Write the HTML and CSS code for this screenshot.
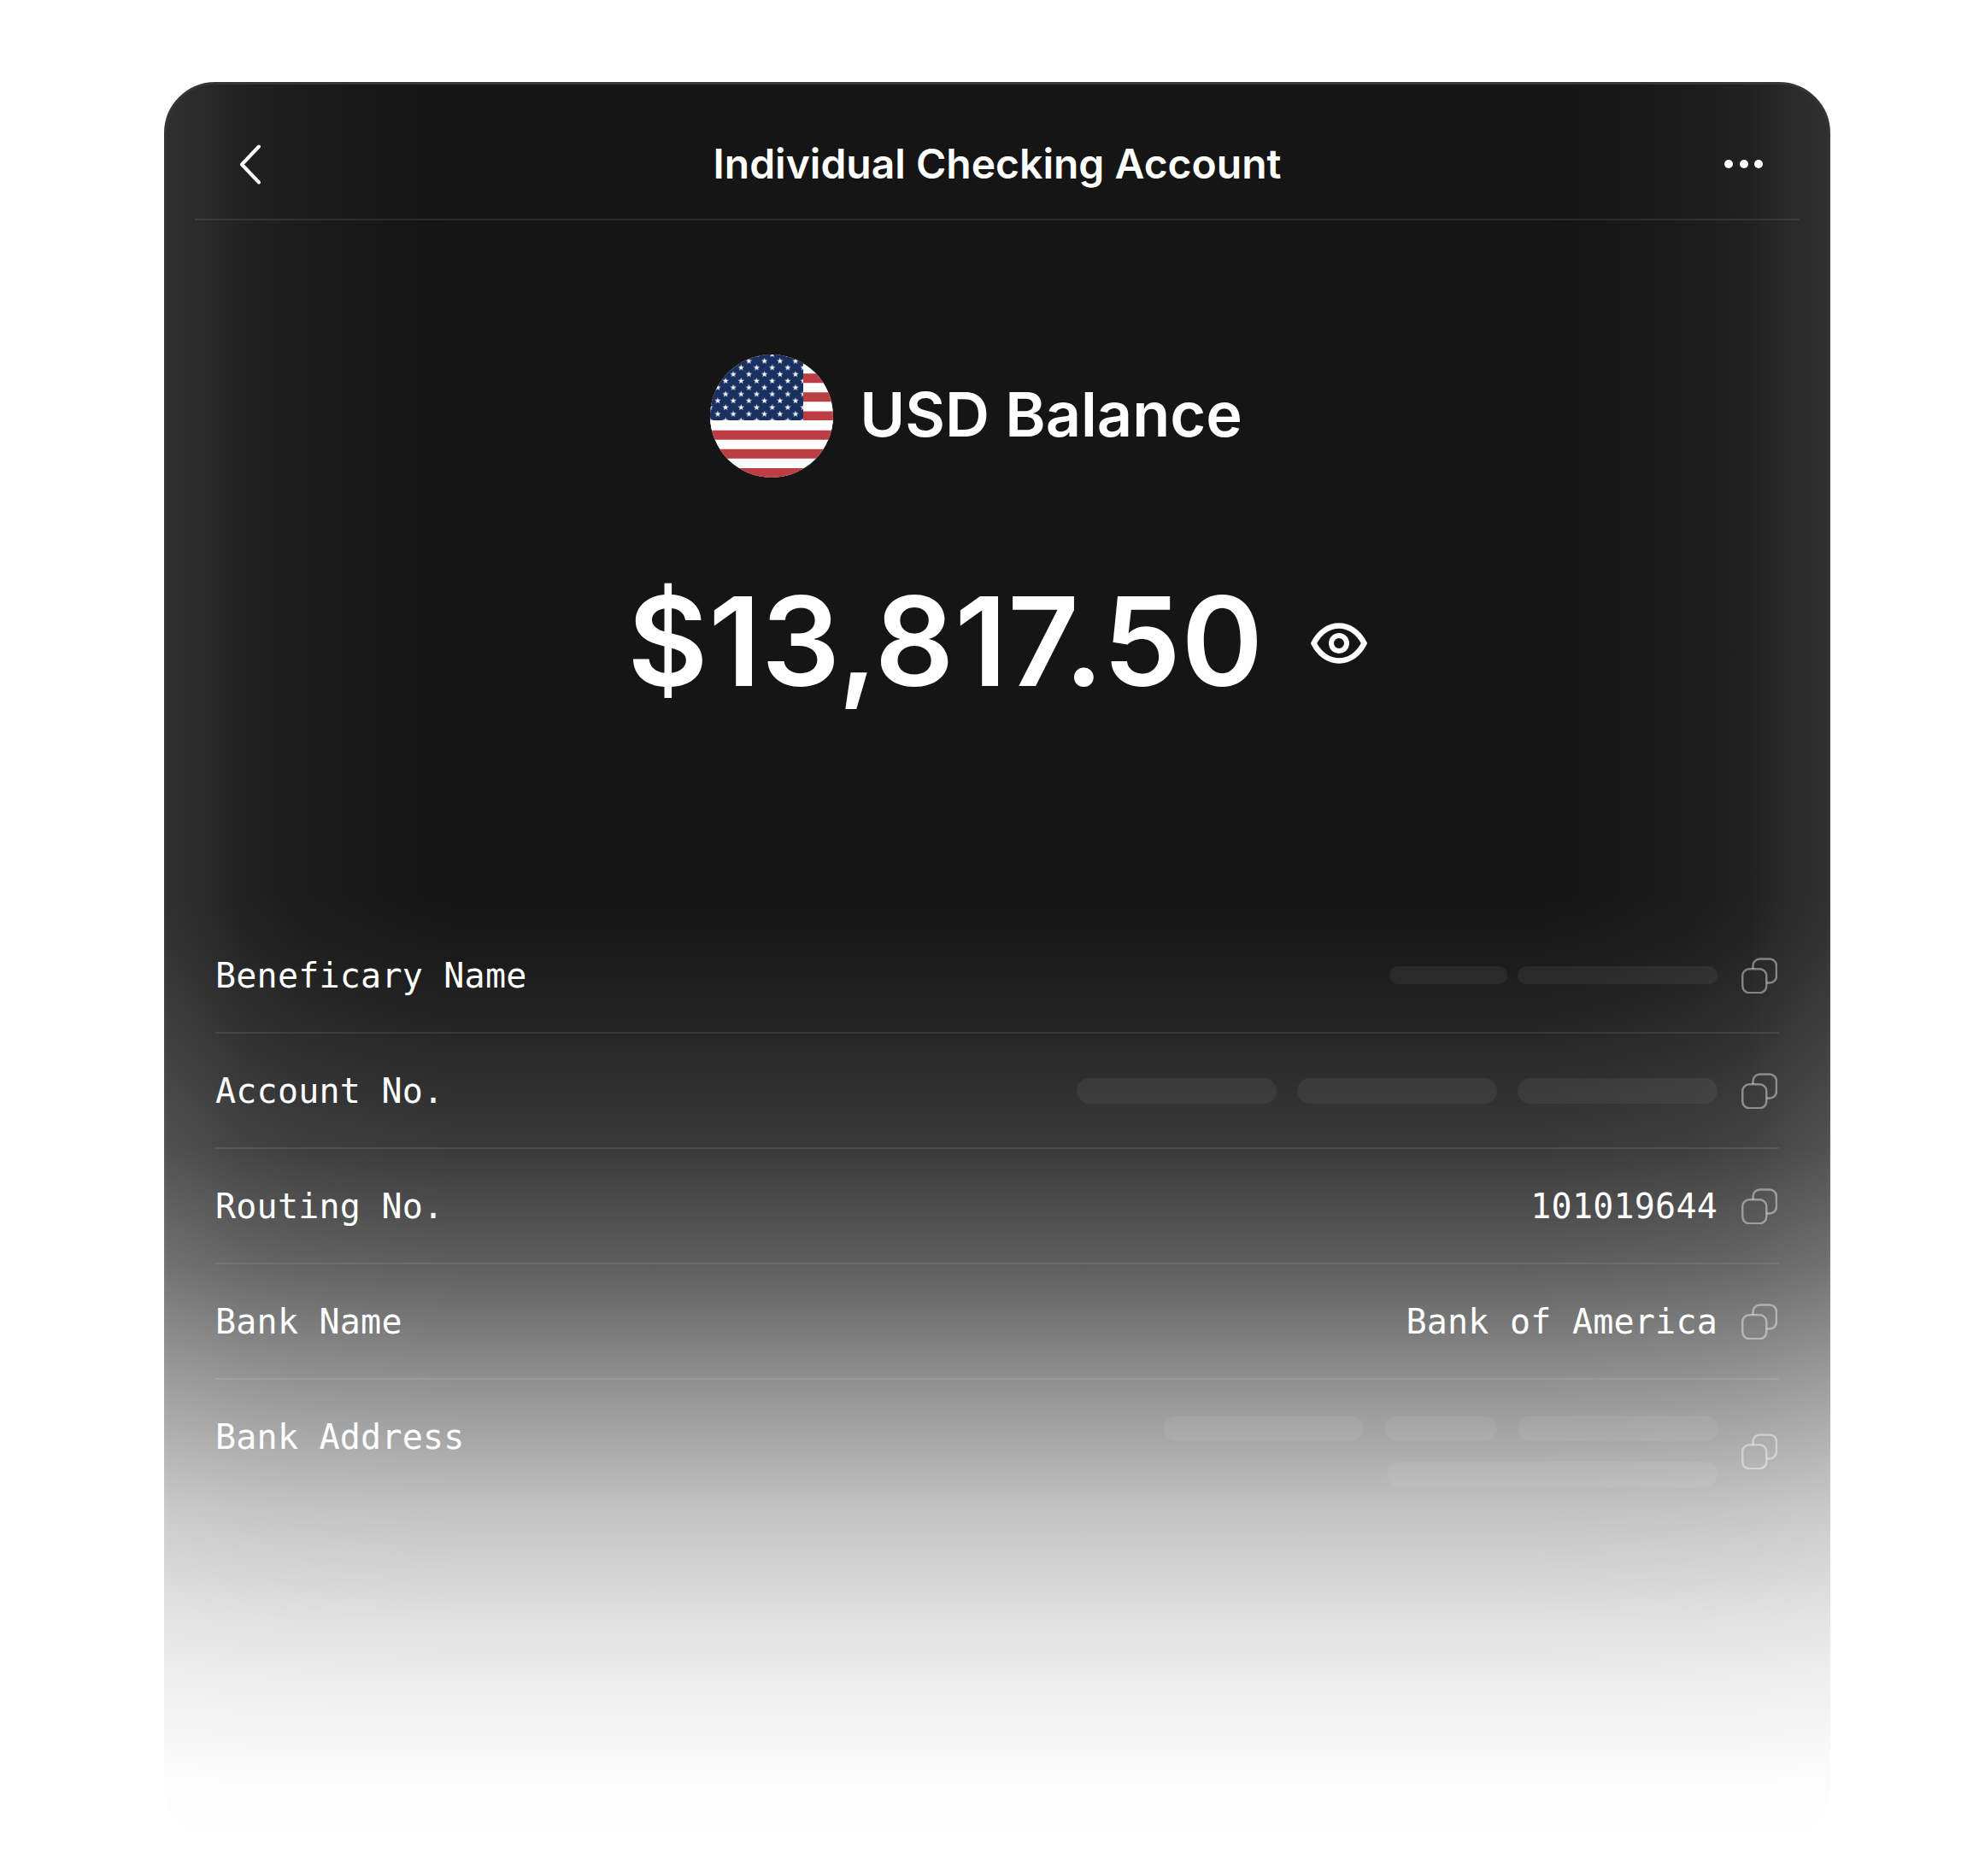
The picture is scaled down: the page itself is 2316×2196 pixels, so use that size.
FILE: index.html
```html
<!doctype html>
<html lang="en">

<head>
    <meta charset="utf-8">
    <title>Individual Checking Account</title>
    <link rel="stylesheet" href="styles.css">
</head>

<body>
    <svg class="defs" width="0" height="0">
        <defs>
            <g id="copy">
                <rect x="1.25" y="13.25" width="28" height="28" rx="8" fill="none" stroke="currentColor" stroke-width="2.5"/>
                <path d="M13.5 13V9.5a8 8 0 0 1 8-8h11.5a8 8 0 0 1 8 8v12a8 8 0 0 1-8 8h-3.5" fill="none" stroke="currentColor" stroke-width="2.5"/>
            </g>
        </defs>
    </svg>

    <div id="card">
        <div class="topbar">
            <svg class="back" width="27" height="49" viewBox="0 0 27 49">
                <path d="M24 3.5L4 24.5L24 45.5" fill="none" stroke="#fff" stroke-width="4" stroke-linecap="round" stroke-linejoin="round"/>
            </svg>
            <div class="title">Individual Checking Account</div>
            <div class="dots"><i></i><i></i><i></i></div>
        </div>

        <div class="balance">
            <svg class="flag" width="144" height="144" viewBox="0 0 144 144">
                <defs>
                    <clipPath id="round"><circle cx="72" cy="72" r="72"/></clipPath>
                    <polygon id="star" points="0,-3.9 .88,-1.2 3.71,-1.2 1.42,.46 2.29,3.16 0,1.49 -2.29,3.16 -1.42,.46 -3.71,-1.2 -.88,-1.2" fill="#fff"/>
                    <pattern id="stars" patternUnits="userSpaceOnUse" x="4.45" y="3.8" width="18.2" height="15.5">
                        <use href="#star" x="4.55" y="3.95"/>
                        <use href="#star" x="13.65" y="11.7"/>
                    </pattern>
                </defs>
                <g clip-path="url(#round)">
                    <rect width="144" height="144" fill="#fff"/>
                    <path d="M0 5.5h144M0 27.7h144M0 49.8h144M0 72h144M0 94.2h144M0 116.3h144M0 138.5h144" stroke="#bd3d44" stroke-width="11.1"/>
                    <rect y="77" width="144" height="11" fill="#fff"/>
                    <rect width="109" height="77" fill="#1a3061"/>
                    <rect width="109" height="77" fill="url(#stars)"/>
                </g>
            </svg>
            <div class="currency">USD Balance</div>
        </div>

        <div class="amount">
            <div class="figure">$13,817.50</div>
            <svg class="eye" width="66" height="48" viewBox="0 0 66 48">
                <path d="M3.5 24C10 11 21 3.5 33 3.5S56 11 62.5 24C56 37 45 44.5 33 44.5S10 37 3.5 24Z" fill="none" stroke="#fff" stroke-width="6.5"/>
                <circle cx="33" cy="24" r="9" fill="none" stroke="#fff" stroke-width="6"/>
            </svg>
        </div>

        <div class="rows">
            <div class="row">
                <div class="label">Beneficary Name</div>
                <div class="value">
                    <div class="pills thin"><span class="w138"></span><span class="w234"></span></div>
                </div>
                <svg class="copy" width="42" height="42" viewBox="0 0 42 42"><use href="#copy"/></svg>
            </div>
            <div class="row">
                <div class="label">Account No.</div>
                <div class="value">
                    <div class="pills"><span class="w234"></span><span class="w234"></span><span class="w234"></span></div>
                </div>
                <svg class="copy" width="42" height="42" viewBox="0 0 42 42"><use href="#copy"/></svg>
            </div>
            <div class="row">
                <div class="label">Routing No.</div>
                <div class="value">101019644</div>
                <svg class="copy" width="42" height="42" viewBox="0 0 42 42"><use href="#copy"/></svg>
            </div>
            <div class="row">
                <div class="label">Bank Name</div>
                <div class="value">Bank of America</div>
                <svg class="copy" width="42" height="42" viewBox="0 0 42 42"><use href="#copy"/></svg>
            </div>
            <div class="row tall">
                <div class="label">Bank Address</div>
                <div class="value">
                    <div class="pills"><span class="w234"></span><span class="w132"></span><span class="w234"></span></div>
                    <div class="pills"><span class="w387"></span></div>
                </div>
                <svg class="copy" width="42" height="42" viewBox="0 0 42 42"><use href="#copy"/></svg>
            </div>
        </div>
    </div>
</body>

</html>
```

FILE: styles.css
```css
html, body {
    margin: 0;
    background: #ffffff;
}

body {
    height: 2196px;
    padding-top: 96px;
    box-sizing: border-box;
    overflow: hidden;
    font-family: "Inter", sans-serif;
    color: #ffffff;
}

.defs {
    display: block;
    height: 0;
}

#card {
    position: relative;
    box-sizing: border-box;
    width: 1950px;
    height: 2054px;
    margin-left: 192px;
    border: 3px solid #353535;
    border-radius: 60px;
    background: linear-gradient(90deg,
        #303030 0, #2a2a2a 40px, #212121 90px, #1b1b1b 160px, #171717 260px, #151515 340px,
        #151515 calc(100% - 340px), #171717 calc(100% - 260px), #1b1b1b calc(100% - 160px), #212121 calc(100% - 90px), #2a2a2a calc(100% - 40px), #303030 100%);
}

/* white fade over the lower half of the card */
#card::after {
    content: "";
    position: absolute;
    top: -3px;
    right: -3px;
    bottom: -3px;
    left: -3px;
    pointer-events: none;
    background: linear-gradient(180deg,
        rgba(255, 255, 255, 0) 950px,
        rgba(255, 255, 255, .017) 1004px,
        rgba(255, 255, 255, .065) 1104px,
        rgba(255, 255, 255, .155) 1248px,
        rgba(255, 255, 255, .313) 1384px,
        rgba(255, 255, 255, .485) 1494px,
        rgba(255, 255, 255, .56) 1544px,
        rgba(255, 255, 255, .74) 1671px,
        rgba(255, 255, 255, .875) 1804px,
        rgba(255, 255, 255, .936) 1893px,
        rgba(255, 255, 255, .983) 1982px,
        rgba(255, 255, 255, 1) 2054px);
}

.topbar {
    display: grid;
    grid-template-columns: 1fr auto 1fr;
    align-items: center;
    height: 72px;
    margin: 0 33px;
    padding: 57px 43px 28px;
    border-bottom: 2px solid rgba(255, 255, 255, .09);
}

.back {
    margin-left: 8px;
}

.title {
    font-size: 48px;
    font-weight: 600;
    line-height: 72px;
}

.dots {
    display: flex;
    justify-self: end;
    gap: 7.5px;
}

.dots i {
    width: 10px;
    height: 10px;
    border-radius: 50%;
    background: #ffffff;
}

.balance {
    display: flex;
    justify-content: center;
    align-items: center;
    gap: 31.5px;
    margin-top: 157px;
    padding-right: 49.5px;
}

.flag {
    display: block;
}

.currency {
    margin-bottom: 5px;
    font-size: 72px;
    font-weight: 600;
}

.amount {
    display: flex;
    justify-content: center;
    align-items: center;
    gap: 55px;
    margin-top: 120px;
}

.figure {
    font-size: 145px;
    font-weight: 640;
    line-height: 144px;
    letter-spacing: .6px;
}

.eye {
    display: block;
    margin-top: 4px;
}

.rows {
    margin: 252px 57px 0;
    font-family: "DejaVu Sans Mono", monospace;
    font-size: 40px;
    letter-spacing: .22px;
}

.row {
    display: flex;
    align-items: center;
    box-sizing: border-box;
    height: 135px;
    padding-right: 2px;
    border-bottom: 2px solid rgba(255, 255, 255, .09);
}

.row.tall {
    align-items: flex-start;
    padding-top: 42px;
    border-bottom: none;
}

.row.tall .label {
    margin-top: 1px;
}

.row.tall .copy {
    margin-top: 21px;
}

.label {
    flex: 1;
    line-height: 48px;
}

.value {
    line-height: 48px;
    text-align: right;
}

.copy {
    display: block;
    flex: none;
    margin-left: 28px;
    color: rgba(255, 255, 255, .42);
}

.pills {
    display: flex;
    justify-content: flex-end;
    gap: 24px;
}

.pills + .pills {
    margin-top: 24px;
}

.pills span {
    height: 30px;
    border-radius: 15px;
    background: rgba(255, 255, 255, .06);
}

.pills.thin {
    gap: 12px;
}

.pills.thin span {
    height: 21px;
    border-radius: 10px;
}

.w132 { width: 132px; }
.w138 { width: 138px; }
.w234 { width: 234px; }
.w387 { width: 387px; }
```
